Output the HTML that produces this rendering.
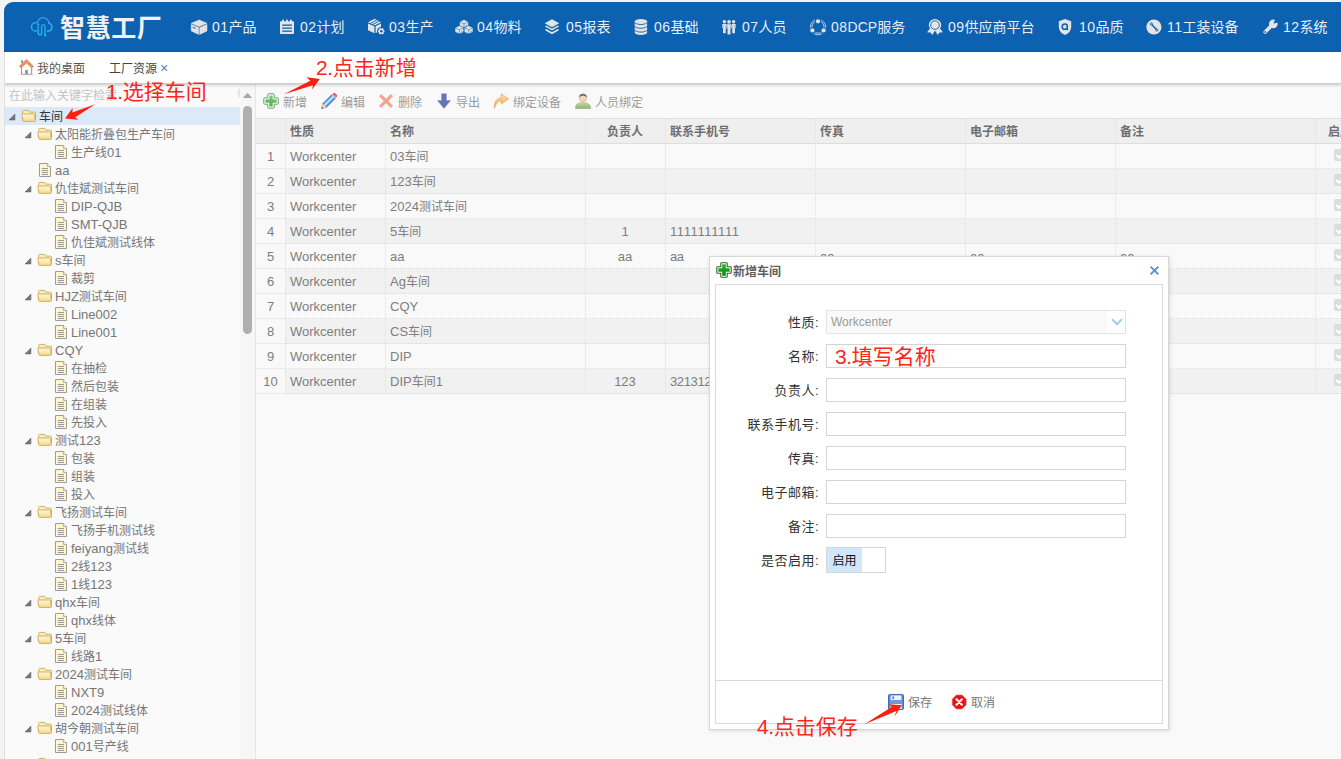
<!DOCTYPE html>
<html lang="zh-CN"><head><meta charset="utf-8"><title>智慧工厂</title>
<style>
*{box-sizing:border-box;margin:0;padding:0}
html,body{width:1341px;height:759px;overflow:hidden;background:#f5f4f4;font-family:"Liberation Sans","Noto Sans CJK SC",sans-serif;font-size:12px;color:#666}
#app{position:absolute;left:4px;top:2px;width:1337px;height:757px;background:#fafafa;border-top-left-radius:9px;overflow:hidden}
#lb{position:absolute;left:0;top:50px;width:1px;height:707px;background:#e0e0e0;z-index:6}
#hdr{position:absolute;left:0;top:0;width:1337px;height:50px;background:#0c61b0}
#logo{position:absolute;left:56px;top:4px;font-size:25px;line-height:44px;color:#f1f1f1;font-weight:700;letter-spacing:0.6px;white-space:nowrap}
.nt{position:absolute;top:13px;font-size:14px;line-height:24px;color:#e9eef5;white-space:nowrap}
.nt i{font-style:normal;letter-spacing:0.5px}
.ni{position:absolute}
#tabs{position:absolute;left:0;top:50px;width:1337px;height:32px;background:#fff;border-bottom:1px solid #cfcfcf;box-shadow:0 1px 3px rgba(0,0,0,.22);z-index:5}
#tabs span{position:absolute;top:8px;line-height:18px;font-size:12px;color:#555;white-space:nowrap}
#left{position:absolute;left:1px;top:81px;width:235px;height:676px;background:#fafafa;overflow:hidden}
#search{position:absolute;left:4px;top:4px;font-size:12px;line-height:18px;color:#c4c4c4;white-space:nowrap}
.tr{position:absolute;left:0;width:235px;height:18px;line-height:18px;font-size:12px;color:#767676;white-space:nowrap}
.tr.sel{background:#dbe9f8;color:#333}
.tr b{position:absolute;top:1px;font-weight:400}
.tr i{font-style:normal;font-size:13px}
.tr svg{position:absolute}
#vs{position:absolute;left:236px;top:81px;width:15px;height:676px;background:#f6f6f6}
#split{position:absolute;left:251px;top:81px;width:1px;height:676px;background:#e6e6e6}
#main{position:absolute;left:252px;top:81px;width:1085px;height:676px;background:#f9f9f9;overflow:hidden}
.tb{position:absolute;top:11px;line-height:18px;font-size:12px;color:#9c9c9c;white-space:nowrap}
#grid{position:absolute;left:0;top:35px;width:1085px}
.gh{position:absolute;left:0;top:0;width:1085px;height:26px;background:#efefef;border-top:1px solid #e2e2e2;border-bottom:1px solid #dedede}
.gh span{position:absolute;top:2px;line-height:23px;font-weight:700;font-size:12px;color:#6e6e6e;white-space:nowrap}
.gr{position:absolute;left:0;width:1085px;height:25px;border-bottom:1px dotted #dcdcdc}
.gr.ev{background:linear-gradient(to right,rgba(241,241,241,0) 29px,#f1f1f1 29px)}
.gr span{position:absolute;top:1px;line-height:24px;font-size:12px;color:#7e7e7e;white-space:nowrap}
.gr i{font-style:normal;font-size:13px}
.gr span.c{text-align:center}
.vl{position:absolute;top:0;width:0;border-left:1px dotted #dfdfdf}
.ck{position:absolute;left:1078px;width:12px;height:12px;border-radius:2px;background:#dcdcdc}
.ck:after{content:'';position:absolute;left:2px;top:3px;width:6px;height:3px;border-left:2px solid #fff;border-bottom:2px solid #fff;transform:rotate(-45deg)}
#dlg{position:absolute;left:705px;top:254px;width:460px;height:474px;background:#fff;border:1px solid #d6d6d6;box-shadow:1px 1px 4px rgba(0,0,0,.12);z-index:20}
#dlgt{position:absolute;left:23px;top:6px;font-size:12px;line-height:18px;font-weight:700;color:#5e5e5e;white-space:nowrap}
#dlgp{position:absolute;left:5px;top:27px;width:448px;height:440px;border:1px solid #d9d9d9;background:#fff}
.lb{position:absolute;left:0;width:103px;text-align:right;letter-spacing:0.5px;font-size:13px;line-height:24px;color:#333;white-space:nowrap}
.in{position:absolute;left:110px;width:300px;height:24px;border:1px solid #d5d5d5;background:#fff}
#foot{position:absolute;left:0;top:395px;width:446px;height:43px;border-top:1px solid #d9d9d9}
.fb{position:absolute;top:13px;line-height:18px;font-size:12px;color:#777;white-space:nowrap}
.an{position:absolute;color:#fd2618;font-size:21px;line-height:26px;white-space:nowrap;z-index:30}
.an i{font-style:normal;letter-spacing:-0.4px}
.ar{position:absolute;z-index:31}
</style></head>
<body>
<div id="app">
<div id="lb"></div><div id="hdr">
<svg class="ni" style="left:24px;top:12px" width="28" height="26" viewBox="28 14 28 26"><use href="#cloud"/></svg>
<div id="logo">智慧工厂</div>
<svg class="ni" style="left:184px;top:15px" width="22" height="20" viewBox="188 17 22 20"><use href="#ic1"/></svg><span class="nt" style="left:208px"><i>01</i>产品</span>
<svg class="ni" style="left:274px;top:15px" width="22" height="20" viewBox="278 17 22 20"><use href="#ic2"/></svg><span class="nt" style="left:296px"><i>02</i>计划</span>
<svg class="ni" style="left:362px;top:15px" width="22" height="20" viewBox="366 17 22 20"><use href="#ic3"/></svg><span class="nt" style="left:385px"><i>03</i>生产</span>
<svg class="ni" style="left:449px;top:15px" width="22" height="20" viewBox="453 17 22 20"><use href="#ic4"/></svg><span class="nt" style="left:473px"><i>04</i>物料</span>
<svg class="ni" style="left:539px;top:15px" width="22" height="20" viewBox="543 17 22 20"><use href="#ic5"/></svg><span class="nt" style="left:562px"><i>05</i>报表</span>
<svg class="ni" style="left:629px;top:15px" width="22" height="20" viewBox="633 17 22 20"><use href="#ic6"/></svg><span class="nt" style="left:650px"><i>06</i>基础</span>
<svg class="ni" style="left:715px;top:15px" width="22" height="20" viewBox="719 17 22 20"><use href="#ic7"/></svg><span class="nt" style="left:738px"><i>07</i>人员</span>
<svg class="ni" style="left:803px;top:15px" width="22" height="20" viewBox="807 17 22 20"><use href="#ic8"/></svg><span class="nt" style="left:827px"><i>08</i>DCP服务</span>
<svg class="ni" style="left:920px;top:15px" width="22" height="20" viewBox="924 17 22 20"><use href="#ic9"/></svg><span class="nt" style="left:944px"><i>09</i>供应商平台</span>
<svg class="ni" style="left:1052px;top:15px" width="22" height="20" viewBox="1056 17 22 20"><use href="#ic10"/></svg><span class="nt" style="left:1075px"><i>10</i>品质</span>
<svg class="ni" style="left:1140px;top:15px" width="22" height="20" viewBox="1144 17 22 20"><use href="#ic11"/></svg><span class="nt" style="left:1163px"><i>11</i>工装设备</span>
<svg class="ni" style="left:1256px;top:15px" width="22" height="20" viewBox="1260 17 22 20"><use href="#ic12"/></svg><span class="nt" style="left:1279px"><i>12</i>系统</span>
</div>
<div id="tabs"><svg style="position:absolute;left:14px;top:6px" width="18" height="18" viewBox="18 58 18 18"><use href="#home"/></svg><span style="left:33px">我的桌面</span><span style="left:105px;color:#444">工厂资源</span><span style="left:156px;color:#5580c8;font-size:14px;top:7px">×</span></div>
<div id="left"><div id="search">在此输入关键字检索</div><svg style="position:absolute;left:231px;top:4px" width="6" height="12" viewBox="0 0 6 12"><path d="M5 1 A6 6 0 0 0 5 11" fill="#dcecfb" stroke="#cfcfcf" stroke-width="0.8"/></svg>
<div class="tr sel" style="top:24px"><svg style="left:3px;top:6px" width="8" height="8" viewBox="0 0 8 8"><path d="M6.9 1.1 V6.9 H1.1 Z" fill="#7a7a7a" stroke="#5e5e5e" stroke-width="0.6"/></svg><svg style="left:16px;top:2px" width="16" height="14" viewBox="0 0 16 14"><use href="#fold"/></svg><b style="left:34px">车间</b></div>
<div class="tr" style="top:42px"><svg style="left:19px;top:6px" width="8" height="8" viewBox="0 0 8 8"><path d="M6.9 1.1 V6.9 H1.1 Z" fill="#7a7a7a" stroke="#5e5e5e" stroke-width="0.6"/></svg><svg style="left:32px;top:2px" width="16" height="14" viewBox="0 0 16 14"><use href="#fold"/></svg><b style="left:50px">太阳能折叠包生产车间</b></div>
<div class="tr" style="top:60px"><svg style="left:48px;top:1px" width="16" height="16" viewBox="0 0 16 16"><use href="#doc"/></svg><b style="left:66px">生产线<i>01</i></b></div>
<div class="tr" style="top:78px"><svg style="left:32px;top:1px" width="16" height="16" viewBox="0 0 16 16"><use href="#doc"/></svg><b style="left:50px"><i>aa</i></b></div>
<div class="tr" style="top:96px"><svg style="left:19px;top:6px" width="8" height="8" viewBox="0 0 8 8"><path d="M6.9 1.1 V6.9 H1.1 Z" fill="#7a7a7a" stroke="#5e5e5e" stroke-width="0.6"/></svg><svg style="left:32px;top:2px" width="16" height="14" viewBox="0 0 16 14"><use href="#fold"/></svg><b style="left:50px">仇佳斌测试车间</b></div>
<div class="tr" style="top:114px"><svg style="left:48px;top:1px" width="16" height="16" viewBox="0 0 16 16"><use href="#doc"/></svg><b style="left:66px"><i>DIP-QJB</i></b></div>
<div class="tr" style="top:132px"><svg style="left:48px;top:1px" width="16" height="16" viewBox="0 0 16 16"><use href="#doc"/></svg><b style="left:66px"><i>SMT-QJB</i></b></div>
<div class="tr" style="top:150px"><svg style="left:48px;top:1px" width="16" height="16" viewBox="0 0 16 16"><use href="#doc"/></svg><b style="left:66px">仇佳斌测试线体</b></div>
<div class="tr" style="top:168px"><svg style="left:19px;top:6px" width="8" height="8" viewBox="0 0 8 8"><path d="M6.9 1.1 V6.9 H1.1 Z" fill="#7a7a7a" stroke="#5e5e5e" stroke-width="0.6"/></svg><svg style="left:32px;top:2px" width="16" height="14" viewBox="0 0 16 14"><use href="#fold"/></svg><b style="left:50px"><i>s</i>车间</b></div>
<div class="tr" style="top:186px"><svg style="left:48px;top:1px" width="16" height="16" viewBox="0 0 16 16"><use href="#doc"/></svg><b style="left:66px">裁剪</b></div>
<div class="tr" style="top:204px"><svg style="left:19px;top:6px" width="8" height="8" viewBox="0 0 8 8"><path d="M6.9 1.1 V6.9 H1.1 Z" fill="#7a7a7a" stroke="#5e5e5e" stroke-width="0.6"/></svg><svg style="left:32px;top:2px" width="16" height="14" viewBox="0 0 16 14"><use href="#fold"/></svg><b style="left:50px"><i>HJZ</i>测试车间</b></div>
<div class="tr" style="top:222px"><svg style="left:48px;top:1px" width="16" height="16" viewBox="0 0 16 16"><use href="#doc"/></svg><b style="left:66px"><i>Line002</i></b></div>
<div class="tr" style="top:240px"><svg style="left:48px;top:1px" width="16" height="16" viewBox="0 0 16 16"><use href="#doc"/></svg><b style="left:66px"><i>Line001</i></b></div>
<div class="tr" style="top:258px"><svg style="left:19px;top:6px" width="8" height="8" viewBox="0 0 8 8"><path d="M6.9 1.1 V6.9 H1.1 Z" fill="#7a7a7a" stroke="#5e5e5e" stroke-width="0.6"/></svg><svg style="left:32px;top:2px" width="16" height="14" viewBox="0 0 16 14"><use href="#fold"/></svg><b style="left:50px"><i>CQY</i></b></div>
<div class="tr" style="top:276px"><svg style="left:48px;top:1px" width="16" height="16" viewBox="0 0 16 16"><use href="#doc"/></svg><b style="left:66px">在抽检</b></div>
<div class="tr" style="top:294px"><svg style="left:48px;top:1px" width="16" height="16" viewBox="0 0 16 16"><use href="#doc"/></svg><b style="left:66px">然后包装</b></div>
<div class="tr" style="top:312px"><svg style="left:48px;top:1px" width="16" height="16" viewBox="0 0 16 16"><use href="#doc"/></svg><b style="left:66px">在组装</b></div>
<div class="tr" style="top:330px"><svg style="left:48px;top:1px" width="16" height="16" viewBox="0 0 16 16"><use href="#doc"/></svg><b style="left:66px">先投入</b></div>
<div class="tr" style="top:348px"><svg style="left:19px;top:6px" width="8" height="8" viewBox="0 0 8 8"><path d="M6.9 1.1 V6.9 H1.1 Z" fill="#7a7a7a" stroke="#5e5e5e" stroke-width="0.6"/></svg><svg style="left:32px;top:2px" width="16" height="14" viewBox="0 0 16 14"><use href="#fold"/></svg><b style="left:50px">测试<i>123</i></b></div>
<div class="tr" style="top:366px"><svg style="left:48px;top:1px" width="16" height="16" viewBox="0 0 16 16"><use href="#doc"/></svg><b style="left:66px">包装</b></div>
<div class="tr" style="top:384px"><svg style="left:48px;top:1px" width="16" height="16" viewBox="0 0 16 16"><use href="#doc"/></svg><b style="left:66px">组装</b></div>
<div class="tr" style="top:402px"><svg style="left:48px;top:1px" width="16" height="16" viewBox="0 0 16 16"><use href="#doc"/></svg><b style="left:66px">投入</b></div>
<div class="tr" style="top:420px"><svg style="left:19px;top:6px" width="8" height="8" viewBox="0 0 8 8"><path d="M6.9 1.1 V6.9 H1.1 Z" fill="#7a7a7a" stroke="#5e5e5e" stroke-width="0.6"/></svg><svg style="left:32px;top:2px" width="16" height="14" viewBox="0 0 16 14"><use href="#fold"/></svg><b style="left:50px">飞扬测试车间</b></div>
<div class="tr" style="top:438px"><svg style="left:48px;top:1px" width="16" height="16" viewBox="0 0 16 16"><use href="#doc"/></svg><b style="left:66px">飞扬手机测试线</b></div>
<div class="tr" style="top:456px"><svg style="left:48px;top:1px" width="16" height="16" viewBox="0 0 16 16"><use href="#doc"/></svg><b style="left:66px"><i>feiyang</i>测试线</b></div>
<div class="tr" style="top:474px"><svg style="left:48px;top:1px" width="16" height="16" viewBox="0 0 16 16"><use href="#doc"/></svg><b style="left:66px"><i>2</i>线<i>123</i></b></div>
<div class="tr" style="top:492px"><svg style="left:48px;top:1px" width="16" height="16" viewBox="0 0 16 16"><use href="#doc"/></svg><b style="left:66px"><i>1</i>线<i>123</i></b></div>
<div class="tr" style="top:510px"><svg style="left:19px;top:6px" width="8" height="8" viewBox="0 0 8 8"><path d="M6.9 1.1 V6.9 H1.1 Z" fill="#7a7a7a" stroke="#5e5e5e" stroke-width="0.6"/></svg><svg style="left:32px;top:2px" width="16" height="14" viewBox="0 0 16 14"><use href="#fold"/></svg><b style="left:50px"><i>qhx</i>车间</b></div>
<div class="tr" style="top:528px"><svg style="left:48px;top:1px" width="16" height="16" viewBox="0 0 16 16"><use href="#doc"/></svg><b style="left:66px"><i>qhx</i>线体</b></div>
<div class="tr" style="top:546px"><svg style="left:19px;top:6px" width="8" height="8" viewBox="0 0 8 8"><path d="M6.9 1.1 V6.9 H1.1 Z" fill="#7a7a7a" stroke="#5e5e5e" stroke-width="0.6"/></svg><svg style="left:32px;top:2px" width="16" height="14" viewBox="0 0 16 14"><use href="#fold"/></svg><b style="left:50px"><i>5</i>车间</b></div>
<div class="tr" style="top:564px"><svg style="left:48px;top:1px" width="16" height="16" viewBox="0 0 16 16"><use href="#doc"/></svg><b style="left:66px">线路<i>1</i></b></div>
<div class="tr" style="top:582px"><svg style="left:19px;top:6px" width="8" height="8" viewBox="0 0 8 8"><path d="M6.9 1.1 V6.9 H1.1 Z" fill="#7a7a7a" stroke="#5e5e5e" stroke-width="0.6"/></svg><svg style="left:32px;top:2px" width="16" height="14" viewBox="0 0 16 14"><use href="#fold"/></svg><b style="left:50px"><i>2024</i>测试车间</b></div>
<div class="tr" style="top:600px"><svg style="left:48px;top:1px" width="16" height="16" viewBox="0 0 16 16"><use href="#doc"/></svg><b style="left:66px"><i>NXT9</i></b></div>
<div class="tr" style="top:618px"><svg style="left:48px;top:1px" width="16" height="16" viewBox="0 0 16 16"><use href="#doc"/></svg><b style="left:66px"><i>2024</i>测试线体</b></div>
<div class="tr" style="top:636px"><svg style="left:19px;top:6px" width="8" height="8" viewBox="0 0 8 8"><path d="M6.9 1.1 V6.9 H1.1 Z" fill="#7a7a7a" stroke="#5e5e5e" stroke-width="0.6"/></svg><svg style="left:32px;top:2px" width="16" height="14" viewBox="0 0 16 14"><use href="#fold"/></svg><b style="left:50px">胡今朝测试车间</b></div>
<div class="tr" style="top:654px"><svg style="left:48px;top:1px" width="16" height="16" viewBox="0 0 16 16"><use href="#doc"/></svg><b style="left:66px"><i>001</i>号产线</b></div>
<div class="tr" style="top:672px"><svg style="left:19px;top:6px" width="8" height="8" viewBox="0 0 8 8"><path d="M6.9 1.1 V6.9 H1.1 Z" fill="#7a7a7a" stroke="#5e5e5e" stroke-width="0.6"/></svg><svg style="left:32px;top:2px" width="16" height="14" viewBox="0 0 16 14"><use href="#fold"/></svg><b style="left:50px"></b></div>
</div>
<div id="vs"><svg style="position:absolute;left:2px;top:9px" width="11" height="7" viewBox="0 0 11 7"><path d="M5.5 0.8 L10.2 6 H0.8 Z" fill="#a8a8a8"/></svg><div style="position:absolute;left:3px;top:23px;width:9px;height:228px;border-radius:4.5px;background:#afafaf"></div></div>
<div id="split"></div>
<div id="main">
<svg style="position:absolute;left:7px;top:10px" width="16" height="16" viewBox="0 0 16 16"><use href="#add"/></svg><span class="tb" style="left:27px">新增</span>
<svg style="position:absolute;left:65px;top:10px" width="16" height="16" viewBox="0 0 16 16"><use href="#edit"/></svg><span class="tb" style="left:85px">编辑</span>
<svg style="position:absolute;left:122px;top:10px" width="16" height="16" viewBox="0 0 16 16"><use href="#del"/></svg><span class="tb" style="left:142px">删除</span>
<svg style="position:absolute;left:180px;top:10px" width="16" height="16" viewBox="0 0 16 16"><use href="#exp"/></svg><span class="tb" style="left:200px">导出</span>
<svg style="position:absolute;left:237px;top:10px" width="16" height="16" viewBox="0 0 16 16"><use href="#bind"/></svg><span class="tb" style="left:257px">绑定设备</span>
<svg style="position:absolute;left:319px;top:10px" width="16" height="16" viewBox="0 0 16 16"><use href="#user"/></svg><span class="tb" style="left:339px">人员绑定</span>
<div id="grid"><div class="gh"><span style="left:34px">性质</span><span style="left:134px">名称</span><span style="left:329px;width:80px;text-align:center">负责人</span><span style="left:414px">联系手机号</span><span style="left:564px">传真</span><span style="left:714px">电子邮箱</span><span style="left:864px">备注</span><span style="left:1072px">启用</span></div>
<div class="gr" style="top:26px"><span class="c" style="left:0;width:29px"><i>1</i></span><span style="left:34px"><i>Workcenter</i></span><span style="left:134px"><i>03</i>车间</span><i class="ck" style="top:5px"></i></div>
<div class="gr ev" style="top:51px"><span class="c" style="left:0;width:29px"><i>2</i></span><span style="left:34px"><i>Workcenter</i></span><span style="left:134px"><i>123</i>车间</span><i class="ck" style="top:5px"></i></div>
<div class="gr" style="top:76px"><span class="c" style="left:0;width:29px"><i>3</i></span><span style="left:34px"><i>Workcenter</i></span><span style="left:134px"><i>2024</i>测试车间</span><i class="ck" style="top:5px"></i></div>
<div class="gr ev" style="top:101px"><span class="c" style="left:0;width:29px"><i>4</i></span><span style="left:34px"><i>Workcenter</i></span><span style="left:134px"><i>5</i>车间</span><span class="c" style="left:329px;width:80px"><i>1</i></span><span style="left:414px;font-kerning:none;letter-spacing:-0.36px"><i>1111111111</i></span><i class="ck" style="top:5px"></i></div>
<div class="gr" style="top:126px"><span class="c" style="left:0;width:29px"><i>5</i></span><span style="left:34px"><i>Workcenter</i></span><span style="left:134px"><i>aa</i></span><span class="c" style="left:329px;width:80px"><i>aa</i></span><span style="left:414px;font-kerning:none;letter-spacing:-0.36px"><i>aa</i></span><span style="left:564px"><i>aa</i></span><span style="left:714px"><i>aa</i></span><span style="left:864px"><i>aa</i></span><i class="ck" style="top:5px"></i></div>
<div class="gr ev" style="top:151px"><span class="c" style="left:0;width:29px"><i>6</i></span><span style="left:34px"><i>Workcenter</i></span><span style="left:134px"><i>Ag</i>车间</span><i class="ck" style="top:5px"></i></div>
<div class="gr" style="top:176px"><span class="c" style="left:0;width:29px"><i>7</i></span><span style="left:34px"><i>Workcenter</i></span><span style="left:134px"><i>CQY</i></span><i class="ck" style="top:5px"></i></div>
<div class="gr ev" style="top:201px"><span class="c" style="left:0;width:29px"><i>8</i></span><span style="left:34px"><i>Workcenter</i></span><span style="left:134px"><i>CS</i>车间</span><i class="ck" style="top:5px"></i></div>
<div class="gr" style="top:226px"><span class="c" style="left:0;width:29px"><i>9</i></span><span style="left:34px"><i>Workcenter</i></span><span style="left:134px"><i>DIP</i></span><i class="ck" style="top:5px"></i></div>
<div class="gr ev" style="top:251px"><span class="c" style="left:0;width:29px"><i>10</i></span><span style="left:34px"><i>Workcenter</i></span><span style="left:134px"><i>DIP</i>车间<i>1</i></span><span class="c" style="left:329px;width:80px"><i>123</i></span><span style="left:414px;font-kerning:none;letter-spacing:-0.36px"><i>3213123</i></span><i class="ck" style="top:5px"></i></div>
<i class="vl" style="left:29px;height:276px"></i><i class="vl" style="left:129px;height:276px"></i><i class="vl" style="left:329px;height:276px"></i><i class="vl" style="left:409px;height:276px"></i><i class="vl" style="left:559px;height:276px"></i><i class="vl" style="left:709px;height:276px"></i><i class="vl" style="left:859px;height:276px"></i><i class="vl" style="left:1059px;height:276px"></i></div>
</div>
<div id="dlg"><svg style="position:absolute;left:6px;top:5px" width="16" height="16" viewBox="0 0 16 16"><use href="#add2"/></svg><div id="dlgt">新增车间</div><svg style="position:absolute;left:439px;top:8px" width="11" height="11" viewBox="0 0 11 11"><path d="M1.6 1.6 L9.4 9.4 M9.400 1.600 L1.600 9.400" stroke="#5d91d8" stroke-width="2" fill="none"/></svg>
<div id="dlgp">
<span class="lb" style="top:26px">性质:</span><div class="in" style="top:25px;background:#fff;border-color:#e3e3e3"><span style="position:absolute;left:0;top:0;width:280px;height:22px;background:#f9f9f9"></span><span style="position:absolute;left:4px;top:0;line-height:22px;font-size:12px;color:#999">Workcenter</span><svg style="position:absolute;left:284px;top:7px" width="12" height="8" viewBox="0 0 12 8"><path d="M1 1.200 L6 6.200 L11 1.200" fill="none" stroke="#8fccf6" stroke-width="1.700"/></svg></div>
<span class="lb" style="top:60px">名称:</span><div class="in" style="top:59px"></div>
<span class="lb" style="top:94px">负责人:</span><div class="in" style="top:93px"></div>
<span class="lb" style="top:128px">联系手机号:</span><div class="in" style="top:127px"></div>
<span class="lb" style="top:162px">传真:</span><div class="in" style="top:161px"></div>
<span class="lb" style="top:196px">电子邮箱:</span><div class="in" style="top:195px"></div>
<span class="lb" style="top:230px">备注:</span><div class="in" style="top:229px"></div>
<span class="lb" style="top:264px">是否启用:</span><div class="in" style="top:262px;width:60px;height:26px;border-color:#d6d6d6"><span style="position:absolute;left:0;top:0;width:35px;height:24px;background:#cfe6fc;color:#111;font-size:12px;line-height:26px;text-align:center">启用</span></div>
<div id="foot"><svg style="position:absolute;left:172px;top:13px" width="16" height="16" viewBox="0 0 16 16"><use href="#save"/></svg><span class="fb" style="left:192px">保存</span><svg style="position:absolute;left:235px;top:13px" width="16" height="16" viewBox="0 0 16 16"><use href="#cancel"/></svg><span class="fb" style="left:255px">取消</span></div>
</div></div>
<div class="an" style="left:102px;top:77px"><i>1.</i>选择车间</div>
<div class="an" style="left:312px;top:53px"><i>2.</i>点击新增</div>
<div class="an" style="left:831px;top:342px"><i>3.</i>填写名称</div>
<div class="an" style="left:753px;top:712px"><i>4.</i>点击保存</div>
<svg class="ar" style="left:0;top:0" width="1337" height="757" viewBox="4 2 1337 757"><g fill="#fd2010"><path d="M65 118.400 L72.600 107.900 L72.400 112.400 L95.200 104.300 L75.300 117.300 L78.400 119.800 Z"/><path d="M319.800 79.100 L306.600 77.300 L310.300 80.700 L283.900 94.300 L312.900 85.200 L312.100 89.400 Z"/><path d="M901.900 705.300 L889 704.200 L891.600 706.900 L864 724.500 L896.400 711.100 L894.500 716.400 Z"/></g></svg>
<svg width="0" height="0" style="position:absolute"><defs>
<linearGradient id="lg" gradientUnits="userSpaceOnUse" x1="0" y1="17" x2="0" y2="36"><stop offset="0" stop-color="#2f97f3"/><stop offset="1" stop-color="#1cc4f6"/></linearGradient>
<g id="cloud" fill="none" stroke="url(#lg)" stroke-linecap="round"><path d="M36.500 31 H35.600 A4.100 4.100 0 0 1 35.600 22.800 Q36.800 22.800 37.500 22.200 A5.720 5.720 0 0 1 48.800 23.300 A3.900 3.900 0 0 1 48.300 31 H47.300" stroke-width="1.500"/><path d="M38.100 25.200 V33.200 A1.750 1.750 0 0 0 41.600 33.200 V26.400 A1.700 1.700 0 0 1 45 26.400 V34.600" stroke-width="1.300"/><circle cx="38.100" cy="24.300" r="0.800" stroke-width="0.900"/><circle cx="45" cy="35.500" r="0.800" stroke-width="0.900"/></g>
<g id="ic1" fill="#e4e4e4" stroke="#e4e4e4" stroke-width="0.500" stroke-linejoin="round"><path d="M199.100 19.900 L207 23.300 L199.100 26.500 L191.200 23.300 Z"/><path d="M191.200 24.400 L198.600 27.500 V34.400 L191.200 30.900 Z"/><path d="M199.700 27.500 L207 24.400 V30.900 L199.700 34.400 Z"/><path d="M192.800 27.300 L195.400 28.400" stroke="#0c61b0" stroke-width="1"/></g>
<g id="ic2" fill="#e4e4e4"><rect x="280" y="21.300" width="14" height="12.800" rx="0.800"/><rect x="282.200" y="19.600" width="1.700" height="3" rx="0.600"/><rect x="286.100" y="19.600" width="1.700" height="3" rx="0.600"/><rect x="290" y="19.600" width="1.700" height="3" rx="0.600"/><g fill="#0c61b0"><rect x="282.200" y="24.500" width="9.700" height="1.300"/><rect x="282.200" y="27.500" width="9.700" height="1.300"/><rect x="282.200" y="30.500" width="9.700" height="1.300"/></g></g>
<g id="ic3" fill="#e4e4e4"><path d="M374.700 18.800 L381 22.300 L375 25.300 L368 22.300 Z"/><path d="M370.300 23.500 L376.900 19.900 M372.700 24.500 L379 21.100" stroke="#0c61b0" stroke-width="0.900"/><path d="M368 23.400 L374.400 26.300 V33.200 L368 30.300 Z"/><path d="M375.600 26.300 L381 23.400 V30 L375.600 33.200 Z"/><circle cx="381.300" cy="31.300" r="4.200" fill="#0c61b0"/><circle cx="381.300" cy="31.300" r="2.700"/><path d="M378.100 31.300 H384.500 M379.700 28.530 L382.900 34.070 M382.900 28.530 L379.700 34.070" stroke="#e4e4e4" stroke-width="1.700"/><circle cx="381.300" cy="31.300" r="1.250" fill="#0c61b0"/></g>
<g id="cube"><path d="M0 -4.100 L4.400 -2 V2.400 L0 4.400 L-4.400 2.400 V-2 Z" fill="#e4e4e4" stroke="#0c61b0" stroke-width="0.600" stroke-linejoin="round"/><path d="M0 4.400 V0.200 L-4.400 -2 M0 0.200 L4.400 -2" fill="none" stroke="#0c61b0" stroke-width="0.700" opacity="0.750"/><path d="M1.700 2.300 L3 1.700" stroke="#0c61b0" stroke-width="0.800" opacity="0.800"/></g>
<g id="ic4"><use href="#cube" x="464" y="23.700"/><use href="#cube" x="459.400" y="29.700"/><use href="#cube" x="468.600" y="29.700"/></g>
<g id="ic5" fill="#e4e4e4"><path d="M552 19.300 L559.300 23.300 L552 27.300 L544.700 23.300 Z"/><path d="M544.700 26.300 L546.300 25.500 L552 28.700 L557.700 25.500 L559.300 26.300 L552 30.600 Z"/><path d="M544.700 29.900 L546.300 29.100 L552 32.300 L557.700 29.100 L559.300 29.900 L552 34.200 Z"/></g>
<g id="ic6" fill="#e4e4e4"><path d="M634.700 21.300 A6.200 2.300 0 0 1 647.100 21.300 V32.600 A6.200 2.300 0 0 1 634.700 32.600 Z"/><g fill="none" stroke="#0c61b0" stroke-width="0.900"><path d="M634.700 22.200 A6.200 2.300 0 0 0 647.100 22.200"/><path d="M634.700 26 A6.200 2.300 0 0 0 647.100 26"/><path d="M634.700 29.800 A6.200 2.300 0 0 0 647.100 29.800"/></g></g>
<g id="man" fill="#e4e4e4"><circle cx="0" cy="-5.400" r="1.700"/><path d="M-2.150 -2.300 Q-2.150 -3.300 -1.200 -3.300 H1.200 Q2.150 -3.300 2.150 -2.300 V1.300 H1.350 V6.200 H-1.350 V1.300 H-2.150 Z"/><path d="M-1.350 -1.600 V1.300 M1.350 -1.600 V1.300" stroke="#0c61b0" stroke-width="0.350" fill="none"/></g>
<g id="ic7"><use href="#man" x="724.400" y="27"/><use href="#man" x="733.600" y="27"/><use href="#man" x="729" y="27.700" transform="translate(729 27.700) scale(1.080) translate(-729 -27.700)"/></g>
<g id="ic8" fill="#e4e4e4"><g fill="none" stroke="#e4e4e4" stroke-width="0.800"><circle cx="818" cy="27.100" r="7.700"/><circle cx="818" cy="27.100" r="6.100"/></g><circle cx="818" cy="27.100" r="5.600" fill="none" stroke="#0c61b0" stroke-width="0"/><g stroke="#0c61b0" stroke-width="1.100"><circle cx="818" cy="21.300" r="2.700"/><circle cx="812.400" cy="30.400" r="2.700"/><circle cx="823.600" cy="30.400" r="2.700"/></g></g>
<g id="ic9" fill="#e4e4e4"><path d="M930 28.500 L927 32.300 L930.500 32.500 L932.300 35 L935 30.500 L937.700 35 L939.500 32.500 L943 32.300 L940 28.500 Z"/><circle cx="935" cy="25.100" r="6.200"/><circle cx="935" cy="25.100" r="4.300" fill="none" stroke="#0c61b0" stroke-width="0.900"/></g>
<g id="ic10" fill="#e4e4e4"><path d="M1065 18.900 L1071.200 21.200 V27 Q1071.200 32.300 1065 35 Q1058.800 32.300 1058.800 27 V21.200 Z"/><circle cx="1064.800" cy="26.700" r="2.600" fill="none" stroke="#0c61b0" stroke-width="1.500"/><path d="M1066 28.300 L1068 30" stroke="#0c61b0" stroke-width="1.300"/></g>
<g id="ic11" fill="#e4e4e4"><circle cx="1153.900" cy="27" r="7.600"/><g stroke="#0c61b0" fill="none"><path d="M1152 24.800 L1156.200 29.300" stroke-width="1.500"/><circle cx="1151.300" cy="24" r="1.100" stroke-width="0.900"/><circle cx="1156.800" cy="30" r="1.100" stroke-width="0.900"/></g></g>
<g id="ic12" fill="#e4e4e4"><path d="M1265.200 32 L1272.400 24.800" stroke="#e4e4e4" stroke-width="3.600" stroke-linecap="round"/><circle cx="1273.300" cy="23.900" r="4.300"/><path d="M1273.600 23.600 L1275.600 18 L1279.500 22 Z" fill="#0c61b0"/><circle cx="1265.200" cy="32" r="0.900" fill="#0c61b0"/></g>
<linearGradient id="fg" x1="0" y1="0" x2="0" y2="1"><stop offset="0" stop-color="#fffbe0"/><stop offset="1" stop-color="#f2d888"/></linearGradient>
<linearGradient id="gg" x1="0" y1="0" x2="0" y2="1"><stop offset="0" stop-color="#7fc97f"/><stop offset="1" stop-color="#55ad55"/></linearGradient>
<linearGradient id="gg2" x1="0" y1="0" x2="0" y2="1"><stop offset="0" stop-color="#2fb52f"/><stop offset="1" stop-color="#078507"/></linearGradient>
<linearGradient id="ug" x1="0" y1="0" x2="0" y2="1"><stop offset="0" stop-color="#c3d9ac"/><stop offset="1" stop-color="#8fb371"/></linearGradient>
<linearGradient id="og" x1="0" y1="0" x2="0" y2="1"><stop offset="0" stop-color="#fde3ae"/><stop offset="1" stop-color="#f4ab42"/></linearGradient>
<linearGradient id="bg" x1="0" y1="0" x2="1" y2="1"><stop offset="0" stop-color="#8fc3f2"/><stop offset="1" stop-color="#4a86d2"/></linearGradient>
<g id="home"><path d="M21.300 60.200 H23 V63.500 H21.300 Z" fill="#8a8a8a"/><path d="M21.600 67 V74.300 H31.700 V67" fill="#fff" stroke="#8e8e8e" stroke-width="1"/><rect x="25.200" y="70" width="2.600" height="4.300" fill="#8e8e8e"/><path d="M20 67.400 L26.400 61.200 L32.800 67.400" fill="none" stroke="#ea9160" stroke-width="3" stroke-linejoin="miter"/><path d="M18.500 74.800 H34.500" stroke="#cfcfcf" stroke-width="0.700"/></g>
<g id="fold"><path d="M1.700 2.400 Q1.700 1.400 2.700 1.400 H7.300 Q8.200 1.400 8.500 2.300 L8.800 3.200 H13.600 Q14.500 3.200 14.500 4.100 V11 H1.700 Z" fill="#fbeeb4" stroke="#cfa85a" stroke-width="0.900"/><path d="M0.800 6 Q0.600 5 1.600 5 H12.300 Q13.200 5 13.400 5.900 L14.400 11.600 Q14.500 12.400 13.600 12.400 H2.800 Q2 12.400 1.800 11.600 Z" fill="url(#fg)" stroke="#cfa85a" stroke-width="0.900"/></g>
<g id="doc"><path d="M2.500 1.500 H10.500 L13.500 4.500 V14.500 H2.500 Z" fill="#fdf8c6" stroke="#9c9c9c" stroke-width="1"/><path d="M10.500 1.500 V4.500 H13.500" fill="#fff" stroke="#9c9c9c" stroke-width="0.800"/><path d="M4.800 6.500 H11 M4.800 8.500 H11 M4.800 10.500 H11 M4.800 12.500 H11" stroke="#8f8f8f" stroke-width="0.900"/></g>
<g id="add"><path d="M5.500 0.800 H10.500 Q11.200 0.800 11.200 1.500 V4.800 H14.500 Q15.200 4.800 15.200 5.500 V10.500 Q15.200 11.200 14.500 11.200 H11.200 V14.500 Q11.200 15.200 10.500 15.200 H5.500 Q4.800 15.200 4.800 14.500 V11.200 H1.500 Q0.800 11.200 0.800 10.500 V5.500 Q0.800 4.800 1.500 4.800 H4.800 V1.500 Q4.800 0.800 5.500 0.800 Z" fill="#fff" stroke="#5fa35f" stroke-width="1"/><path d="M6.300 2.400 H9.700 V6.300 H13.600 V9.700 H9.700 V13.600 H6.300 V9.700 H2.400 V6.300 H6.300 Z" fill="url(#gg)"/></g>
<g id="add2"><path d="M5.500 0.800 H10.500 Q11.200 0.800 11.200 1.500 V4.800 H14.500 Q15.200 4.800 15.200 5.500 V10.500 Q15.200 11.200 14.500 11.200 H11.200 V14.500 Q11.200 15.200 10.500 15.200 H5.500 Q4.800 15.200 4.800 14.500 V11.200 H1.500 Q0.800 11.200 0.800 10.500 V5.500 Q0.800 4.800 1.500 4.800 H4.800 V1.500 Q4.800 0.800 5.500 0.800 Z" fill="#fff" stroke="#236b23" stroke-width="1.100"/><path d="M6.200 2.300 H9.800 V6.200 H13.700 V9.800 H9.800 V13.700 H6.200 V9.800 H2.300 V6.200 H6.200 Z" fill="url(#gg2)"/></g>
<g id="edit" transform="translate(8.100 8) rotate(-45)"><path d="M-6.600 -2.600 H6.200 V2.600 H-6.600 Z" fill="#4f8fdc" stroke="#3b74c8" stroke-width="0.600"/><path d="M-6.600 -1.300 H6.200 V1 H-6.600 Z" fill="#bfe0f8"/><path d="M6.200 -2.600 H7.100 V2.600 H6.200 Z" fill="#d9d2ee"/><path d="M7.100 -2.600 H8.600 Q9.800 -2.600 9.800 -1.400 V1.400 Q9.800 2.600 8.600 2.600 H7.100 Z" fill="#e8674d"/><path d="M-6.600 -2.600 L-10.800 0 L-6.600 2.600 Z" fill="#f7ecd0" stroke="#c9a766" stroke-width="0.600" stroke-linejoin="round"/><path d="M-10.800 0 L-8.900 -1.200 V1.200 Z" fill="#555"/></g>
<g id="del" opacity="0.800"><path d="M1.300 3.200 L3.200 1.300 L8 6 L12.800 1.300 L14.700 3.200 L10.100 8 L14.700 12.800 L12.800 14.700 L8 10 L3.200 14.700 L1.300 12.800 L5.900 8 Z" fill="#f08a78" stroke="#f5ab9e" stroke-width="0.800" stroke-linejoin="round"/></g>
<g id="exp"><path d="M5.600 0.800 H10.400 V7.600 H14.500 L8 15.400 L1.500 7.600 H5.600 Z" fill="#6474b4" stroke="#7d8bc2" stroke-width="0.500"/></g>
<g id="bind"><path d="M1.300 15.300 Q0.600 6 8.300 4.500 V0.900 L15.600 5.800 L8.300 10.900 V7.600 Q3.800 8 1.300 15.300 Z" fill="url(#og)" stroke="#dca458" stroke-width="0.700" stroke-linejoin="round"/></g>
<g id="user"><path d="M0.300 15.700 Q0.300 9.400 8 9.400 Q15.700 9.400 15.700 15.700 Z" fill="url(#ug)" stroke="#8db071" stroke-width="0.500"/><circle cx="8" cy="4.800" r="3.900" fill="#f3d6b8" stroke="#c9a988" stroke-width="0.500"/><path d="M4.100 4.600 A3.900 3.900 0 0 1 11.900 4.600 Q10 2.500 8 2.800 Q6 2.500 4.100 4.600 Z" fill="#77706a"/></g>
<g id="save"><rect x="0.500" y="0.500" width="15" height="15" rx="1.300" fill="#5a8ad6" stroke="#3e6dbd" stroke-width="1"/><rect x="2.600" y="1.400" width="10.800" height="4.800" fill="#eef1fb"/><rect x="4.600" y="2.300" width="1.200" height="2.700" fill="#3e5c9c"/><rect x="2" y="6.200" width="12" height="3.600" fill="#6d9be2"/><rect x="2.400" y="10" width="11.200" height="5" fill="#fff"/></g>
<g id="cancel"><path d="M5.400 1.100 H11 L15.100 5.200 V10.800 L11 14.900 H5.400 L1.300 10.800 V5.200 Z" fill="#ea1313" stroke="#f04a4a" stroke-width="0.700" stroke-linejoin="round"/><path d="M5.500 5.300 L10.900 10.700 M10.900 5.300 L5.500 10.700" stroke="#fff" stroke-width="2.100" stroke-linecap="round"/></g>
</defs></svg>
</div>
</body></html>
